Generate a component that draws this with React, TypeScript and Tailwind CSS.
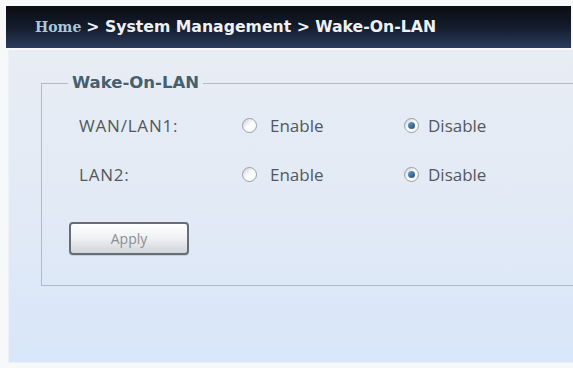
import React from "react";

function Radio({ checked }: { checked: boolean }) {
  return (
    <span className="relative inline-flex h-[15px] w-[15px] items-center justify-center rounded-full border border-[#979fa8] bg-gradient-to-br from-[#c9ced5] via-white to-[#f4f6f8]">
      {checked && (
        <span className="h-[7px] w-[7px] rounded-full bg-gradient-to-br from-[#6aa0c8] to-[#1d4f78]" />
      )}
    </span>
  );
}

function OptionRow({ label, enabled }: { label: string; enabled: boolean }) {
  return (
    <div className="flex h-[24px] items-center">
      <span className="w-[200px] pl-[37px] text-[17px] tracking-[0.8px] text-[#52585e]">{label}</span>
      <label className="flex w-[162px] items-center gap-[13px] text-[17px] text-[#52585e]">
        <Radio checked={enabled} />
        Enable
      </label>
      <label className="flex items-center gap-[9px] text-[17px] text-[#52585e]">
        <Radio checked={!enabled} />
        Disable
      </label>
    </div>
  );
}

export default function App() {
  return (
    <div
      className="h-[368px] w-[573px] overflow-hidden bg-[#f7f8fa] pt-[6px]"
      style={{ fontFamily: "'Open Sans', 'DejaVu Sans', sans-serif" }}
    >
      <div className="ml-[6px] mr-[2px] flex h-[42px] items-center bg-gradient-to-b from-[#0a0d14] via-[#141c2c] to-[#2b3c5e] pl-[29px] font-bold">
        <span
          className="text-[14px] text-[#a9c8da]"
          style={{ fontFamily: "'DejaVu Serif', 'Liberation Serif', serif" }}
        >
          Home
        </span>
        <span
          className="ml-[5px] text-[15.7px] text-[#eef1f5]"
          style={{ fontFamily: "'DejaVu Sans', sans-serif" }}
        >
          &gt; System Management &gt; Wake-On-LAN
        </span>
      </div>

      <div className="ml-[8px] mt-[2px] h-[313px] overflow-hidden border-b border-l border-[#eef2f7] bg-gradient-to-b from-[#e8edf4] via-[#e2eaf5] to-[#d8e6fa] pl-[32px] pt-[21px]">
        <fieldset className="-mr-[10px] h-[215px] border border-[#b3bac2] pt-[18px]">
          <legend
            className="ml-[26px] px-[4px] text-[16.5px] font-bold text-[#45606e]"
            style={{ fontFamily: "'DejaVu Sans', sans-serif" }}
          >
            Wake-On-LAN
          </legend>
          <div className="flex flex-col gap-[25px]">
            <OptionRow label="WAN/LAN1:" enabled={false} />
            <OptionRow label="LAN2:" enabled={false} />
          </div>
          <button className="ml-[27px] mt-[35px] h-[33px] w-[120px] rounded-[4px] border-2 border-[#666d74] bg-gradient-to-b from-[#ffffff] via-[#eef0f2] to-[#d2d6da] text-[14px] text-[#8a8e93] shadow-[0_1px_0_#c8ced6]">
            Apply
          </button>
        </fieldset>
      </div>
    </div>
  );
}
